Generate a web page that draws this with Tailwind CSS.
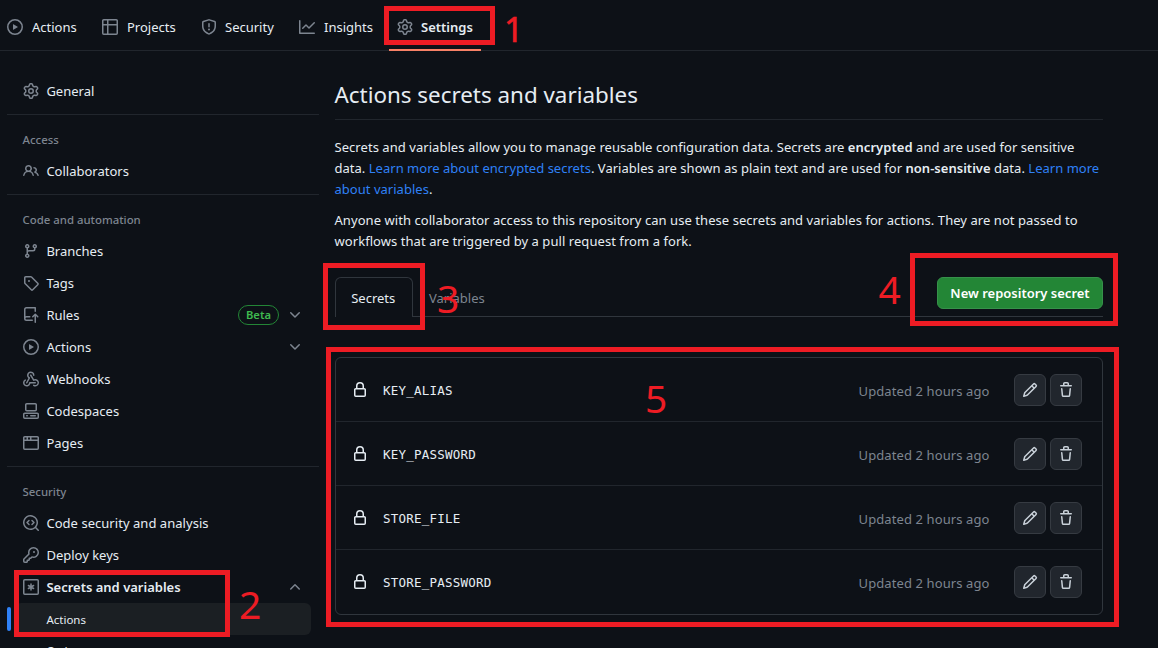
<!DOCTYPE html>
<html lang="en">
<head>
<meta charset="utf-8">
<title>Actions secrets and variables</title>
<script src="https://cdn.jsdelivr.net/npm/@tailwindcss/browser@4"></script>
</head>
<body class="relative h-[648px] w-[1158px] overflow-hidden bg-[#0d1117] font-['Noto_Sans','Open_Sans',sans-serif] text-[13px] text-[#e6edf3]">
<svg class="hidden">
<symbol id="gear" viewBox="0 0 16 16"><path d="M8 0a8.2 8.2 0 0 1 .701.031C9.444.095 9.99.645 10.16 1.29l.288 1.107c.018.066.079.158.212.224.231.114.454.243.668.386.123.082.233.09.299.071l1.103-.303c.644-.176 1.392.021 1.82.63.27.385.506.792.704 1.218.315.675.111 1.422-.364 1.891l-.814.806c-.049.048-.098.147-.088.294.016.257.016.515 0 .772-.01.147.038.246.088.294l.814.806c.475.469.679 1.216.364 1.891a7.977 7.977 0 0 1-.704 1.217c-.428.61-1.176.807-1.82.63l-1.102-.302c-.067-.019-.177-.011-.3.071a5.909 5.909 0 0 1-.668.386c-.133.066-.194.158-.211.224l-.29 1.106c-.168.646-.715 1.196-1.458 1.26a8.006 8.006 0 0 1-1.402 0c-.743-.064-1.289-.614-1.458-1.26l-.289-1.106c-.018-.066-.079-.158-.212-.224a5.738 5.738 0 0 1-.668-.386c-.123-.082-.233-.09-.299-.071l-1.103.303c-.644.176-1.392-.021-1.82-.63a8.12 8.12 0 0 1-.704-1.218c-.315-.675-.111-1.422.363-1.891l.815-.806c.05-.048.098-.147.088-.294a6.214 6.214 0 0 1 0-.772c.01-.147-.038-.246-.088-.294l-.815-.806C.635 6.045.431 5.298.746 4.623a7.92 7.92 0 0 1 .704-1.217c.428-.61 1.176-.807 1.82-.63l1.102.302c.067.019.177.011.3-.071.214-.143.437-.272.668-.386.133-.066.194-.158.211-.224l.29-1.106C6.009.645 6.556.095 7.299.03 7.53.01 7.764 0 8 0Zm-.571 1.525c-.036.003-.108.036-.137.146l-.289 1.105c-.147.561-.549.967-.998 1.189-.173.086-.34.183-.5.29-.417.278-.97.423-1.529.27l-1.103-.303c-.109-.03-.175.016-.195.045-.22.312-.412.644-.573.99-.014.031-.021.11.059.19l.815.806c.411.406.562.957.53 1.456a4.709 4.709 0 0 0 0 .582c.032.499-.119 1.05-.53 1.456l-.815.806c-.081.08-.073.159-.059.19.162.346.353.677.573.989.02.03.085.076.195.046l1.102-.303c.56-.153 1.113-.008 1.53.27.161.107.328.204.501.29.447.222.85.629.997 1.189l.289 1.105c.029.109.101.143.137.146a6.6 6.6 0 0 0 1.142 0c.036-.003.108-.036.137-.146l.289-1.105c.147-.561.549-.967.998-1.189.173-.086.34-.183.5-.29.417-.278.97-.423 1.529-.27l1.103.303c.109.029.175-.016.195-.045.22-.313.411-.644.573-.99.014-.031.021-.11-.059-.19l-.815-.806c-.411-.406-.562-.957-.53-1.456a4.709 4.709 0 0 0 0-.582c-.032-.499.119-1.05.53-1.456l.815-.806c.081-.08.073-.159.059-.19a6.464 6.464 0 0 0-.573-.989c-.02-.03-.085-.076-.195-.046l-1.102.303c-.56.153-1.113.008-1.53-.27a4.44 4.44 0 0 0-.501-.29c-.447-.222-.85-.629-.997-1.189l-.289-1.105c-.029-.11-.101-.143-.137-.146a6.6 6.6 0 0 0-1.142 0ZM11 8a3 3 0 1 1-6 0 3 3 0 0 1 6 0ZM9.5 8a1.5 1.5 0 1 0-3.001.001A1.5 1.5 0 0 0 9.5 8Z"/></symbol>
<symbol id="play" viewBox="0 0 16 16"><path d="M8 0a8 8 0 1 1 0 16A8 8 0 0 1 8 0ZM1.5 8a6.5 6.5 0 1 0 13 0 6.5 6.5 0 0 0-13 0Zm4.879-2.773 4.264 2.559a.25.25 0 0 1 0 .428l-4.264 2.559A.25.25 0 0 1 6 10.559V5.442a.25.25 0 0 1 .379-.215Z"/></symbol>
<symbol id="table" viewBox="0 0 16 16"><path d="M0 1.75C0 .784.784 0 1.75 0h12.5C15.216 0 16 .784 16 1.75v12.5A1.75 1.75 0 0 1 14.25 16H1.75A1.75 1.75 0 0 1 0 14.25ZM6.5 6.5v8h7.75a.25.25 0 0 0 .25-.25V6.5Zm8-1.5V1.75a.25.25 0 0 0-.25-.25H6.5V5Zm-13 1.5v7.75c0 .138.112.25.25.25H5v-8ZM5 5V1.5H1.75a.25.25 0 0 0-.25.25V5Z"/></symbol>
<symbol id="shield" viewBox="0 0 16 16"><path d="M7.467.133a1.748 1.748 0 0 1 1.066 0l5.25 1.68A1.75 1.75 0 0 1 15 3.48V7c0 1.566-.32 3.182-1.303 4.682-.983 1.498-2.585 2.813-5.032 3.855a1.697 1.697 0 0 1-1.33 0c-2.447-1.042-4.049-2.357-5.032-3.855C1.32 10.182 1 8.566 1 7V3.48a1.75 1.75 0 0 1 1.217-1.667Zm.61 1.429a.25.25 0 0 0-.153 0l-5.25 1.68a.25.25 0 0 0-.174.238V7c0 1.358.275 2.666 1.057 3.86.784 1.194 2.121 2.34 4.366 3.297a.196.196 0 0 0 .154 0c2.245-.956 3.582-2.104 4.366-3.298C13.225 9.666 13.5 8.36 13.5 7V3.48a.251.251 0 0 0-.174-.237l-5.25-1.68ZM8.75 4.75v3a.75.75 0 0 1-1.5 0v-3a.75.75 0 0 1 1.5 0ZM9 10.5a1 1 0 1 1-2 0 1 1 0 0 1 2 0Z"/></symbol>
<symbol id="graph" viewBox="0 0 16 16"><path d="M1.5 1.75V13.5h13.75a.75.75 0 0 1 0 1.5H.75a.75.75 0 0 1-.75-.75V1.75a.75.75 0 0 1 1.5 0Zm14.28 2.53-5.25 5.25a.75.75 0 0 1-1.06 0L7 7.06 4.28 9.78a.751.751 0 0 1-1.042-.018.751.751 0 0 1-.018-1.042l3.25-3.25a.75.75 0 0 1 1.06 0L10 7.94l4.72-4.72a.751.751 0 0 1 1.042.018.751.751 0 0 1 .018 1.042Z"/></symbol>
<symbol id="people" viewBox="0 0 16 16"><path d="M2 5.5a3.5 3.5 0 1 1 5.898 2.549 5.508 5.508 0 0 1 3.034 4.084.75.75 0 1 1-1.482.235 4 4 0 0 0-7.9 0 .75.75 0 0 1-1.482-.236A5.507 5.507 0 0 1 3.102 8.05 3.493 3.493 0 0 1 2 5.5ZM11 4a3.001 3.001 0 0 1 2.22 5.018 5.01 5.01 0 0 1 2.56 3.012.749.749 0 0 1-.885.954.752.752 0 0 1-.549-.514 3.507 3.507 0 0 0-2.522-2.372.75.75 0 0 1-.574-.73v-.352a.75.75 0 0 1 .416-.672A1.5 1.5 0 0 0 11 5.5.75.75 0 0 1 11 4Zm-5.5-.5a2 2 0 1 0-.001 3.999A2 2 0 0 0 5.5 3.5Z"/></symbol>
<symbol id="branch" viewBox="0 0 16 16"><path d="M9.5 3.25a2.25 2.25 0 1 1 3 2.122V6A2.5 2.5 0 0 1 10 8.5H6a1 1 0 0 0-1 1v1.128a2.251 2.251 0 1 1-1.5 0V5.372a2.25 2.25 0 1 1 1.5 0v1.836A2.493 2.493 0 0 1 6 7h4a1 1 0 0 0 1-1v-.628A2.25 2.25 0 0 1 9.5 3.25Zm-6 0a.75.75 0 1 0 1.5 0 .75.75 0 0 0-1.5 0Zm8.25-.75a.75.75 0 1 0 0 1.5.75.75 0 0 0 0-1.5ZM4.25 12a.75.75 0 1 0 0 1.5.75.75 0 0 0 0-1.5Z"/></symbol>
<symbol id="tag" viewBox="0 0 16 16"><path d="M1 7.775V2.75C1 1.784 1.784 1 2.75 1h5.025c.464 0 .91.184 1.238.513l6.25 6.25a1.75 1.75 0 0 1 0 2.474l-5.026 5.026a1.75 1.75 0 0 1-2.474 0l-6.25-6.25A1.752 1.752 0 0 1 1 7.775Zm1.5 0c0 .066.026.13.073.177l6.25 6.25a.25.25 0 0 0 .354 0l5.025-5.025a.25.25 0 0 0 0-.354l-6.25-6.25a.25.25 0 0 0-.177-.073H2.75a.25.25 0 0 0-.25.25ZM6 5a1 1 0 1 1 0 2 1 1 0 0 1 0-2Z"/></symbol>
<symbol id="push" viewBox="0 0 16 16"><path d="M1 2.5A2.5 2.5 0 0 1 3.5 0h8.75a.75.75 0 0 1 .75.75v3.5a.75.75 0 0 1-1.5 0V1.5h-8a1 1 0 0 0-1 1v6.708A2.493 2.493 0 0 1 3.5 9h3.25a.75.75 0 0 1 0 1.5H3.5a1 1 0 0 0 0 2h5.75a.75.75 0 0 1 0 1.5H3.5A2.5 2.5 0 0 1 1 11.5Zm13.23 7.79h-.001l-1.224-1.224v6.184a.75.75 0 0 1-1.5 0V9.066L10.28 10.29a.75.75 0 0 1-1.06-1.061l2.505-2.504a.75.75 0 0 1 1.06 0L15.29 9.23a.751.751 0 0 1-.018 1.042.751.751 0 0 1-1.042.018Z"/></symbol>
<symbol id="webhook" viewBox="0 0 16 16"><path d="M5.5 4.25a2.25 2.25 0 0 1 4.5 0 .75.75 0 0 0 1.5 0 3.75 3.75 0 1 0-6.14 2.889l-2.272 4.258a.75.75 0 0 0 1.324.706L7 7.25a.75.75 0 0 0-.309-1.015A2.25 2.25 0 0 1 5.5 4.25Z"/><path d="M7.364 3.607a.75.75 0 0 1 1.03.257l2.608 4.349a3.75 3.75 0 1 1-.628 6.785.75.75 0 0 1 .752-1.299 2.25 2.25 0 1 0-.033-3.88.75.75 0 0 1-1.03-.256L7.107 4.636a.75.75 0 0 1 .257-1.03Z"/><path d="M2.9 8.776A.75.75 0 0 1 2.625 9.8 2.25 2.25 0 1 0 6 11.75a.75.75 0 0 1 .75-.751h5.5a.75.75 0 0 1 0 1.5H7.425a3.751 3.751 0 1 1-5.55-3.998.75.75 0 0 1 1.024.274Z"/></symbol>
<symbol id="codespaces" viewBox="0 0 16 16"><path d="M0 11.25c0-.966.784-1.75 1.75-1.75h12.5c.966 0 1.75.784 1.75 1.75v3A1.75 1.75 0 0 1 14.25 16H1.75A1.75 1.75 0 0 1 0 14.25Zm2-9.5C2 .784 2.784 0 3.75 0h8.5C13.216 0 14 .784 14 1.75v5a1.75 1.75 0 0 1-1.75 1.75h-8.5A1.75 1.75 0 0 1 2 6.75Zm1.75-.25a.25.25 0 0 0-.25.25v5c0 .138.112.25.25.25h8.5a.25.25 0 0 0 .25-.25v-5a.25.25 0 0 0-.25-.25Zm-2 9.5a.25.25 0 0 0-.25.25v3c0 .138.112.25.25.25h12.5a.25.25 0 0 0 .25-.25v-3a.25.25 0 0 0-.25-.25Z"/><path d="M7 12.75a.75.75 0 0 1 .75-.75h4.5a.75.75 0 0 1 0 1.5h-4.5a.75.75 0 0 1-.75-.75Zm-4 0a.75.75 0 0 1 .75-.75h.5a.75.75 0 0 1 0 1.5h-.5a.75.75 0 0 1-.75-.75Z"/></symbol>
<symbol id="browser" viewBox="0 0 16 16"><path d="M0 2.75C0 1.784.784 1 1.75 1h12.5c.966 0 1.75.784 1.75 1.75v10.5A1.75 1.75 0 0 1 14.25 15H1.75A1.75 1.75 0 0 1 0 13.25ZM14.5 6h-13v7.25c0 .138.112.25.25.25h12.5a.25.25 0 0 0 .25-.25Zm-6-3.5v2h6V2.75a.25.25 0 0 0-.25-.25ZM5 2.5v2h2v-2Zm-3.25 0a.25.25 0 0 0-.25.25V4.5h2v-2Z"/></symbol>
<symbol id="codescan" viewBox="0 0 16 16"><path d="M8.47 4.97a.75.75 0 0 1 1.06 0l2 2a.75.75 0 0 1 0 1.06l-2 2a.75.75 0 0 1-1.06-1.06L9.94 7.5 8.47 6.03a.75.75 0 0 1 0-1.06ZM6.53 6.03a.75.75 0 0 0-1.06-1.06l-2 2a.75.75 0 0 0 0 1.06l2 2a.75.75 0 0 0 1.06-1.06L5.06 7.5l1.47-1.47Z"/><path d="M12.246 13.307a7.5 7.5 0 1 1 1.06-1.06l2.474 2.473a.75.75 0 1 1-1.06 1.06l-2.474-2.473ZM1.5 7.5a6.002 6.002 0 0 0 3.608 5.504 6.002 6.002 0 0 0 6.486-1.117.748.748 0 0 1 .292-.293A6 6 0 1 0 1.5 7.5Z"/></symbol>
<symbol id="key" viewBox="0 0 16 16"><path d="M10.5 0a5.499 5.499 0 1 1-1.288 10.848l-.932.932a.749.749 0 0 1-.53.22H7v.75a.749.749 0 0 1-.22.53l-.5.5a.749.749 0 0 1-.53.22H5v.75a.749.749 0 0 1-.22.53l-.5.5a.749.749 0 0 1-.53.22h-2A1.75 1.75 0 0 1 0 14.25v-2c0-.199.079-.389.22-.53l4.932-4.932A5.5 5.5 0 0 1 10.5 0Zm-4 5.5c-.001.431.069.86.205 1.269a.75.75 0 0 1-.181.768L1.5 12.56v1.69c0 .138.112.25.25.25h1.69l.06-.06v-1.19a.75.75 0 0 1 .75-.75h1.19l.06-.06v-1.19a.75.75 0 0 1 .75-.75h1.19l1.023-1.025a.75.75 0 0 1 .768-.18A4 4 0 1 0 6.5 5.5ZM11 6a1 1 0 1 1 0-2 1 1 0 0 1 0 2Z"/></symbol>
<symbol id="asterisk" viewBox="0 0 16 16"><rect x=".75" y=".75" width="14.5" height="14.5" rx="1" fill="none" stroke="currentColor" stroke-width="1.5"/><path d="M8 5v6M5.4 6.5l5.2 3M10.6 6.5l-5.2 3" stroke="currentColor" stroke-width="1.5" stroke-linecap="round"/></symbol>
<symbol id="lock" viewBox="0 0 16 16"><path d="M4 4a4 4 0 0 1 8 0v2h.25c.966 0 1.75.784 1.75 1.75v5.5A1.75 1.75 0 0 1 12.25 15h-8.5A1.75 1.75 0 0 1 2 13.25v-5.5C2 6.784 2.784 6 3.75 6H4Zm8.25 3.5h-8.5a.25.25 0 0 0-.25.25v5.5c0 .138.112.25.25.25h8.5a.25.25 0 0 0 .25-.25v-5.5a.25.25 0 0 0-.25-.25ZM10.5 6V4a2.5 2.5 0 1 0-5 0v2Z"/></symbol>
<symbol id="pencil" viewBox="0 0 16 16"><path d="M11.013 1.427a1.75 1.75 0 0 1 2.474 0l1.086 1.086a1.75 1.75 0 0 1 0 2.474l-8.61 8.61c-.21.21-.47.364-.756.445l-3.251.93a.75.75 0 0 1-.927-.928l.929-3.25c.081-.286.235-.547.445-.758l8.61-8.61Zm.176 4.823L9.75 4.81l-6.286 6.287a.253.253 0 0 0-.064.108l-.558 1.953 1.953-.558a.253.253 0 0 0 .108-.064Zm1.238-3.763a.25.25 0 0 0-.354 0L10.811 3.75l1.439 1.44 1.263-1.263a.25.25 0 0 0 0-.354Z"/></symbol>
<symbol id="trash" viewBox="0 0 16 16"><path d="M11 1.75V3h2.25a.75.75 0 0 1 0 1.5H2.75a.75.75 0 0 1 0-1.5H5V1.75C5 .784 5.784 0 6.75 0h2.5C10.216 0 11 .784 11 1.75ZM4.496 6.675l.66 6.6a.25.25 0 0 0 .249.225h5.19a.25.25 0 0 0 .249-.225l.66-6.6a.75.75 0 0 1 1.492.149l-.66 6.6A1.748 1.748 0 0 1 10.595 15h-5.19a1.75 1.75 0 0 1-1.741-1.575l-.66-6.6a.75.75 0 1 1 1.492-.15ZM6.5 1.75V3h3V1.75a.25.25 0 0 0-.25-.25h-2.5a.25.25 0 0 0-.25.25Z"/></symbol>
<symbol id="down" viewBox="0 0 16 16"><path d="M12.78 5.22a.749.749 0 0 1 0 1.06l-4.25 4.25a.749.749 0 0 1-1.06 0L3.22 6.28a.749.749 0 1 1 1.06-1.06L8 8.939l3.72-3.719a.749.749 0 0 1 1.06 0Z"/></symbol>
<symbol id="up" viewBox="0 0 16 16"><path d="M3.22 10.53a.749.749 0 0 1 0-1.06l4.25-4.25a.749.749 0 0 1 1.06 0l4.25 4.25a.749.749 0 1 1-1.06 1.06L8 6.811 4.28 10.53a.749.749 0 0 1-1.06 0Z"/></symbol>
</svg>

<header class="flex h-[51px] items-start border-b border-[#21262d] pl-[7px] whitespace-nowrap">
  <a class="flex h-[54px] w-[95px] items-center gap-[9px] pt-0.5 [&>svg]:mb-0.5"><svg class="size-4 shrink-0 fill-[#7d8590]"><use href="#play"/></svg>Actions</a>
  <a class="flex h-[54px] w-[99px] items-center gap-[9px] pt-0.5 [&>svg]:mb-0.5"><svg class="size-4 shrink-0 fill-[#7d8590]"><use href="#table"/></svg>Projects</a>
  <a class="flex h-[54px] w-[98px] items-center gap-2 pt-0.5 [&>svg]:mb-0.5"><svg class="size-4 shrink-0 fill-[#7d8590]"><use href="#shield"/></svg>Security</a>
  <a class="flex h-[54px] w-[90px] items-center gap-[9px] pt-0.5 [&>svg]:mb-0.5"><svg class="size-4 shrink-0 fill-[#7d8590]"><use href="#graph"/></svg>Insights</a>
  <a class="flex h-[51px] w-[92px] items-center gap-2 border-b-2 border-[#f78166] pt-[7px] pl-2 font-semibold [&>svg]:mb-0.5"><svg class="size-4 shrink-0 fill-[#7d8590]"><use href="#gear"/></svg>Settings</a>
</header>

<div class="flex">
<nav class="ml-[7px] w-[312px] shrink-0 pt-6 whitespace-nowrap [&>a]:pt-0.5 [&>a>svg]:mb-0.5">
  <a class="flex h-8 items-center gap-[7.4px] pl-4"><svg class="size-4 fill-[#7d8590]"><use href="#gear"/></svg>General</a>
  <h3 class="mt-[7px] h-[41px] border-t border-[#21262d] pt-[15px] pl-[15.5px] text-[11.4px] leading-5 font-medium text-[#7d8590]">Access</h3>
  <a class="flex h-8 items-center gap-[7.4px] pl-4"><svg class="size-4 fill-[#7d8590]"><use href="#people"/></svg>Collaborators</a>
  <h3 class="mt-[7px] h-[41px] border-t border-[#21262d] pt-[15px] pl-[15.5px] text-[11.4px] leading-5 font-medium text-[#7d8590]">Code and automation</h3>
  <a class="flex h-8 items-center gap-[7.4px] pl-4"><svg class="size-4 fill-[#7d8590]"><use href="#branch"/></svg>Branches</a>
  <a class="flex h-8 items-center gap-[7.4px] pl-4"><svg class="size-4 fill-[#7d8590]"><use href="#tag"/></svg>Tags</a>
  <a class="flex h-8 items-center gap-[7.4px] pr-4 pl-4"><svg class="size-4 fill-[#7d8590]"><use href="#push"/></svg>Rules<span class="mr-[0.6px] mb-0.5 ml-auto flex h-5 w-[41px] items-center justify-center rounded-full border border-[#238636] pt-px text-[11.2px] font-semibold text-[#3fb950]">Beta</span><svg class="size-4 fill-[#7d8590]"><use href="#down"/></svg></a>
  <a class="flex h-8 items-center gap-[7.4px] pr-4 pl-4"><svg class="size-4 fill-[#7d8590]"><use href="#play"/></svg>Actions<svg class="ml-auto size-4 fill-[#7d8590]"><use href="#down"/></svg></a>
  <a class="flex h-8 items-center gap-[7.4px] pl-4"><svg class="size-4 fill-[#7d8590]"><use href="#webhook"/></svg>Webhooks</a>
  <a class="flex h-8 items-center gap-[7.4px] pl-4"><svg class="size-4 fill-[#7d8590]"><use href="#codespaces"/></svg>Codespaces</a>
  <a class="flex h-8 items-center gap-[7.4px] pl-4"><svg class="size-4 fill-[#7d8590]"><use href="#browser"/></svg>Pages</a>
  <h3 class="mt-[7px] h-[41px] border-t border-[#21262d] pt-[15px] pl-[15.5px] text-[11.4px] leading-5 font-medium text-[#7d8590]">Security</h3>
  <a class="flex h-8 items-center gap-[7.4px] pl-4 tracking-[0.04px]"><svg class="size-4 fill-[#7d8590]"><use href="#codescan"/></svg>Code security and analysis</a>
  <a class="flex h-8 items-center gap-[7.4px] pl-4"><svg class="size-4 fill-[#7d8590]"><use href="#key"/></svg>Deploy keys</a>
  <a class="flex h-8 items-center gap-[7.4px] pr-4 pl-4 font-semibold"><svg class="size-4 text-[#7d8590]"><use href="#asterisk"/></svg>Secrets and variables<svg class="ml-auto size-4 fill-[#7d8590]"><use href="#up"/></svg></a>
  <div class="flex h-8 items-center gap-1"><span class="h-6 w-1 rounded-md bg-[#2f81f7]"></span><a class="flex h-8 w-[296px] items-center rounded-md bg-[#1b1f23] pt-px pl-[31.4px] text-[11.5px]">Actions</a></div>
  <div class="flex h-8 items-center pb-px pl-[39.4px] text-[11.5px]">Codespaces</div>
</nav>

<main class="ml-[15.5px] w-[768.5px] shrink-0 pt-6">
  <h1 class="h-[45px] border-b border-[#21262d] text-[22.4px] leading-[39px] whitespace-nowrap">Actions secrets and variables</h1>
  <div class="pt-[17px] leading-[21px] whitespace-nowrap">
    <p class="tracking-[0.02px]"><span class="tracking-[0.048px]">Secrets and variables allow you to manage reusable configuration data. Secrets are <b class="font-semibold">encrypted</b> and are used for sensitive</span><br>data. <a class="text-[#2f81f7]">Learn more about encrypted secrets</a>. Variables are shown as plain text and are used for <b class="font-semibold">non-sensitive</b> data. <a class="text-[#2f81f7]">Learn more<br>about variables</a>.</p>
    <p class="mt-[10px] tracking-[0.06px]">Anyone with collaborator access to this repository can use these secrets and variables for actions. They are not passed to<br>workflows that are triggered by a pull request from a fork.</p>
  </div>
  <div class="mt-[25px] flex h-10">
    <div class="flex h-10 w-[78.5px] items-center justify-center rounded-t-md border border-b-0 border-[#30363d] pt-[3px] pr-px">Secrets</div>
    <div class="flex flex-1 items-start border-b border-[#30363d] pl-4"><span class="pt-[11px] leading-[20px] text-[#7d8590]">Variables</span>
      <button class="ml-auto h-8 w-[166px] rounded-md border border-[#36914a] bg-[#238636] pt-0.5 font-semibold text-white">New repository secret</button></div>
  </div>
  <ul class="mt-[40px] rounded-md border border-[#30363d]">
    <li class="flex h-16 items-center border-b border-[#21262d] pr-5 pl-4"><svg class="size-4 fill-[#e6edf3]"><use href="#lock"/></svg><span class="ml-[15.5px] pt-[3px] font-['DejaVu_Sans_Mono',monospace] text-[12.5px] tracking-[0.22px]">KEY_ALIAS</span><span class="mr-[24.5px] ml-auto pt-[4px] tracking-[0.1px] text-[#7d8590]">Updated 2 hours ago</span><button class="mr-1 grid size-8 place-items-center rounded-md border border-[#363b42] bg-[#21262d]"><svg class="size-4 fill-[#c9d1d9]"><use href="#pencil"/></svg></button><button class="grid size-8 place-items-center rounded-md border border-[#363b42] bg-[#21262d]"><svg class="size-4 fill-[#c9d1d9]"><use href="#trash"/></svg></button></li>
    <li class="flex h-16 items-center border-b border-[#21262d] pr-5 pl-4"><svg class="size-4 fill-[#e6edf3]"><use href="#lock"/></svg><span class="ml-[15.5px] pt-[3px] font-['DejaVu_Sans_Mono',monospace] text-[12.5px] tracking-[0.22px]">KEY_PASSWORD</span><span class="mr-[24.5px] ml-auto pt-[4px] tracking-[0.1px] text-[#7d8590]">Updated 2 hours ago</span><button class="mr-1 grid size-8 place-items-center rounded-md border border-[#363b42] bg-[#21262d]"><svg class="size-4 fill-[#c9d1d9]"><use href="#pencil"/></svg></button><button class="grid size-8 place-items-center rounded-md border border-[#363b42] bg-[#21262d]"><svg class="size-4 fill-[#c9d1d9]"><use href="#trash"/></svg></button></li>
    <li class="flex h-16 items-center border-b border-[#21262d] pr-5 pl-4"><svg class="size-4 fill-[#e6edf3]"><use href="#lock"/></svg><span class="ml-[15.5px] pt-[3px] font-['DejaVu_Sans_Mono',monospace] text-[12.5px] tracking-[0.22px]">STORE_FILE</span><span class="mr-[24.5px] ml-auto pt-[4px] tracking-[0.1px] text-[#7d8590]">Updated 2 hours ago</span><button class="mr-1 grid size-8 place-items-center rounded-md border border-[#363b42] bg-[#21262d]"><svg class="size-4 fill-[#c9d1d9]"><use href="#pencil"/></svg></button><button class="grid size-8 place-items-center rounded-md border border-[#363b42] bg-[#21262d]"><svg class="size-4 fill-[#c9d1d9]"><use href="#trash"/></svg></button></li>
    <li class="flex h-16 items-center pr-5 pl-4"><svg class="size-4 fill-[#e6edf3]"><use href="#lock"/></svg><span class="ml-[15.5px] pt-[2px] font-['DejaVu_Sans_Mono',monospace] text-[12.5px] tracking-[0.22px]">STORE_PASSWORD</span><span class="mr-[24.5px] ml-auto pt-[3px] tracking-[0.1px] text-[#7d8590]">Updated 2 hours ago</span><button class="mr-1 grid size-8 place-items-center rounded-md border border-[#363b42] bg-[#21262d]"><svg class="size-4 fill-[#c9d1d9]"><use href="#pencil"/></svg></button><button class="grid size-8 place-items-center rounded-md border border-[#363b42] bg-[#21262d]"><svg class="size-4 fill-[#c9d1d9]"><use href="#trash"/></svg></button></li>
  </ul>
</main>
</div>

<!-- Numbered step annotations over the page -->
<div class="pointer-events-none text-[39px] leading-none text-[#ed1c24]">
  <div class="absolute top-[6px] left-[384px] h-[39px] w-[111px] border-5 border-[#ed1c24]"></div>
  <div class="absolute top-[570px] left-[14px] h-[67px] w-[216px] border-5 border-[#ed1c24]"></div>
  <div class="absolute top-[263px] left-[323px] h-[67px] w-[102px] border-5 border-[#ed1c24]"></div>
  <div class="absolute top-[253px] left-[910px] h-[73px] w-[208px] border-5 border-[#ed1c24]"></div>
  <div class="absolute top-[347px] left-[326px] h-[280px] w-[793px] border-5 border-[#ed1c24]"></div>
  <span class="absolute top-[12px] left-[504px] text-[34px] [-webkit-text-stroke:0.6px_#ed1c24]">1</span>
  <span class="absolute top-[584px] left-[239px]">2</span>
  <span class="absolute top-[278px] left-[437px]">3</span>
  <span class="absolute top-[269px] left-[878.5px]">4</span>
  <span class="absolute top-[378px] left-[645px]">5</span>
</div>
</body>
</html>
